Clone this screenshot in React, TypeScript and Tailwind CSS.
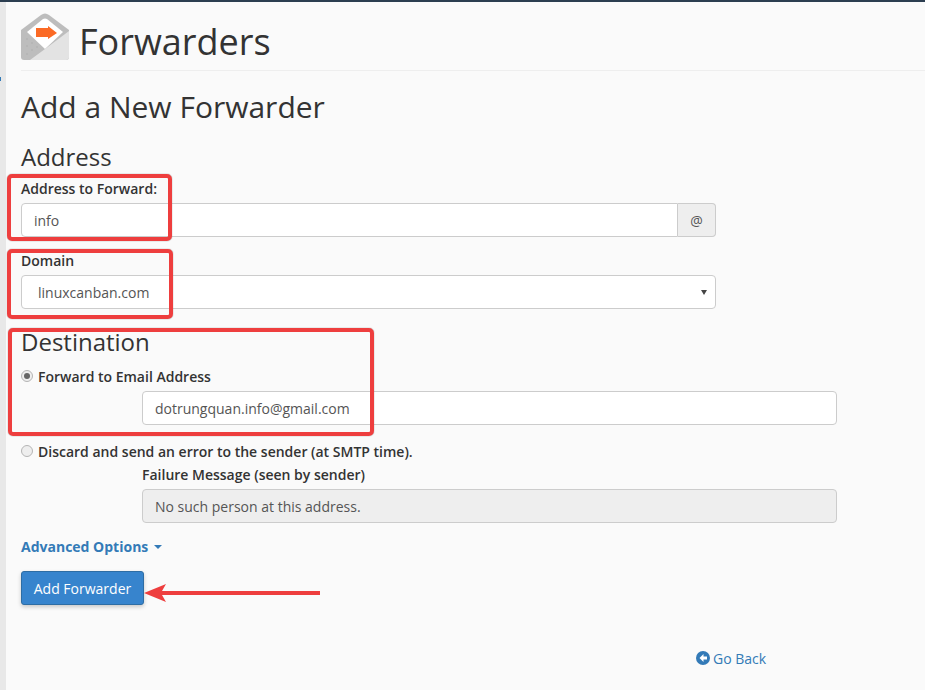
import React from "react";

function Logo() {
  return (
    <svg width="48" height="48" viewBox="0 0 48 48" className="mt-[11px] shrink-0">
      <path d="M0 17 L20 2 Q24 -1 28 2 L48 17 V44 Q48 47 45 47 H3 Q0 47 0 44 Z" fill="#bdbdbd" />
      <path d="M6 19 L22 6 Q24 5 26 6 L42 19 L24 36 Z" fill="#ffffff" />
      <path d="M48 18 V44 Q48 47 45 47 H9 L24 36 Z" fill="#e3e3e3" />
      <g fill="#a9a9a9">
        <circle cx="6" cy="26" r="0.7" />
        <circle cx="11" cy="30" r="0.7" />
        <circle cx="6" cy="33" r="0.7" />
        <circle cx="11" cy="37" r="0.7" />
        <circle cx="16" cy="34" r="0.7" />
        <circle cx="6" cy="41" r="0.7" />
      </g>
      <path d="M15 15 H27 V13 L36 20 L27 26 V24 H15 Z" fill="#fb6a25" />
    </svg>
  );
}

const box = "absolute rounded-[5px] border-[4px] border-[#ee3e3e] shadow-[0_0_1px_#555]";

export default function App() {
  return (
    <div className="relative h-[690px] w-[925px] overflow-hidden bg-[#fafafa] font-['Open_Sans',sans-serif] text-[14px] text-[#333333]">
      <div className="h-[2px] bg-[#2c3e50]" />
      <div className="absolute left-0 top-[2px] h-[688px] w-[6px] bg-[#e8e8e8]">
        <span className="absolute left-0 top-[75px] h-[4px] w-[1px] bg-[#337ab7]" />
      </div>
      <div className="pl-[21px]">
        <div className="flex h-[69px] items-start gap-[10px] border-b border-[#eeeeee]">
          <Logo />
          <h1 className="mt-[20px] text-[36px] font-normal leading-[40px] text-[#333333]">Forwarders</h1>
        </div>

        <h2 className="mt-[16px] text-[30px] leading-[40px] text-[#333333]">Add a New Forwarder</h2>
        <h3 className="mt-[17px] text-[24px] leading-[26px] text-[#333333]">Address</h3>

        <label className="mt-[9px] block text-[14px] font-semibold leading-[20px]">Address to Forward:</label>
        <div className="mt-[4px] flex h-[34px] w-[695px]">
          <div className="flex flex-1 items-center rounded-l-[4px] border border-[#cccccc] bg-white px-[12px] text-[#555555]">info</div>
          <div className="flex w-[38px] items-center justify-center rounded-r-[4px] border border-l-0 border-[#cccccc] bg-[#eeeeee] text-[14px] text-[#555555]">@</div>
        </div>

        <label className="mt-[14px] block text-[14px] font-semibold leading-[20px]">Domain</label>
        <div className="relative mt-[4px] flex h-[34px] w-[695px] items-center rounded-[4px] border border-[#cccccc] bg-white pl-[16px] text-[#555555]">
          linuxcanban.com
          <span className="absolute right-[8px] top-[14px] h-0 w-0 border-x-[3px] border-t-[5px] border-x-transparent border-t-[#444444]" />
        </div>

        <h3 className="mt-[18px] text-[24px] leading-[30px] text-[#333333]">Destination</h3>
        <div className="mt-[9px] flex h-[20px] items-center gap-[5px] font-semibold">
          <span className="flex h-[12px] w-[12px] items-center justify-center rounded-full border border-[#b5b5b5] bg-[#eeeeee]">
            <span className="h-[6px] w-[6px] rounded-full bg-[#666666]" />
          </span>
          <span>Forward to Email Address</span>
        </div>
        <div className="ml-[121px] mt-[5px] flex h-[34px] w-[695px] items-center rounded-[4px] border border-[#cccccc] bg-white px-[12px] text-[#555555]">dotrungquan.info@gmail.com</div>

        <div className="mt-[16px] flex h-[20px] items-center gap-[5px] font-semibold">
          <span className="h-[12px] w-[12px] rounded-full border border-[#b5b5b5] bg-[#eeeeee]" />
          <span>Discard and send an error to the sender (at SMTP time).</span>
        </div>
        <div className="ml-[121px] mt-[4px] font-semibold leading-[20px]">Failure Message (seen by sender)</div>
        <div className="ml-[121px] mt-[4px] flex h-[34px] w-[695px] items-center rounded-[4px] border border-[#cccccc] bg-[#eeeeee] px-[12px] text-[#555555]">No such person at this address.</div>

        <div className="mt-[13px] flex h-[20px] items-center gap-[6px] font-bold text-[#337ab7]">
          <span>Advanced Options</span>
          <span className="mt-[1px] h-0 w-0 border-x-[4px] border-t-[4px] border-x-transparent border-t-[#337ab7]" />
        </div>

        <button className="mt-[15px] block h-[34px] w-[123px] rounded-[3px] border border-[#2e6da4] bg-[#3784cd] text-[14px] text-white shadow-[0_2px_4px_rgba(0,0,0,0.2)]">Add Forwarder</button>

        <div className="ml-[675px] mt-[43px] flex h-[20px] items-center gap-[3px] text-[#337ab7]">
          <svg width="14" height="14" viewBox="0 0 14 14">
            <circle cx="7" cy="7" r="7" fill="#337ab7" />
            <path d="M7.5 3 L3.5 7 L7.5 11 V8.5 H11 V5.5 H7.5 Z" fill="#ffffff" />
          </svg>
          <span>Go Back</span>
        </div>
      </div>

      <div className={`${box} left-[7px] top-[174px] h-[67px] w-[165px]`} />
      <div className={`${box} left-[7px] top-[249px] h-[70px] w-[166px]`} />
      <div className={`${box} left-[8px] top-[328px] h-[108px] w-[366px]`} />

      <svg className="absolute left-[144px] top-[583px]" width="177" height="20" viewBox="0 0 177 20">
        <path d="M0 10 L22 1 L18 8 H176 V12 H18 L22 19 Z" fill="#ee3e3e" />
      </svg>
    </div>
  );
}
